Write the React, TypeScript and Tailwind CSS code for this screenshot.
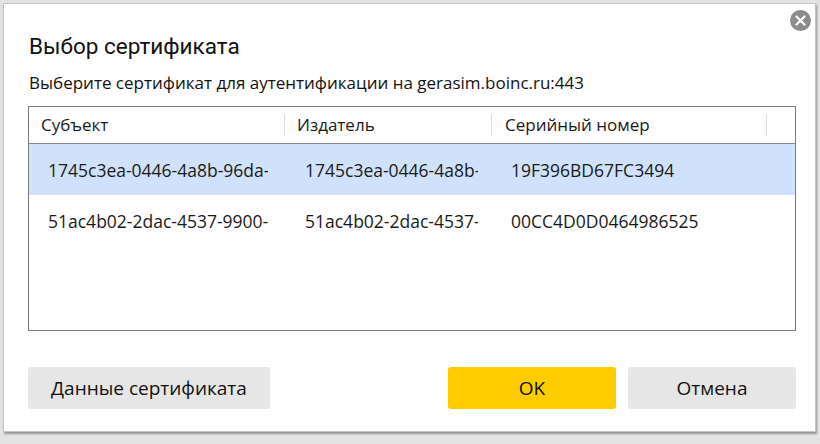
import React from "react";

const rows = [
  {
    subject: "1745c3ea-0446-4a8b-96da-7a4b1c2d3e4f",
    issuer: "1745c3ea-0446-4a8b-96da-7a4b1c2d3e4f",
    serial: "19F396BD67FC3494",
  },
  {
    subject: "51ac4b02-2dac-4537-9900-3f2e1d0c9b8a",
    issuer: "51ac4b02-2dac-4537-9900-3f2e1d0c9b8a",
    serial: "00CC4D0D0464986525",
  },
];

export default function App() {
  return (
    <div className="w-[820px] h-[444px] bg-[#e3e3e3] pt-[3px] pl-[3px] overflow-hidden">
      <div className="relative w-[813px] h-[429px] bg-white border border-[#c4c4c4] shadow-[1px_2px_2px_rgba(0,0,0,0.35)] flex flex-col" style={{ fontFamily: "'Open Sans', 'Noto Sans', sans-serif" }}>
        <button className="absolute right-[4px] top-[6px] w-[21px] h-[21px] rounded-full bg-[#8c8c8c] flex items-center justify-center">
          <svg width="11" height="11" viewBox="0 0 11 11">
            <path d="M1.5 1.5 L9.5 9.5 M9.5 1.5 L1.5 9.5" stroke="white" strokeWidth="2.2" strokeLinecap="round" />
          </svg>
        </button>
        <h1 className="pl-[25px] pt-[28px] text-[22.5px] leading-[28px] text-[#111] font-normal" style={{ fontFamily: "Roboto, sans-serif" }}>
          Выбор сертификата
        </h1>
        <p className="pl-[25px] mt-[13px] text-[17px] leading-[20px] text-[#111]">
          Выберите сертификат для аутентификации на gerasim.boinc.ru:443
        </p>
        <div className="ml-[24px] mt-[13px] w-[768px] h-[225px] border border-[#7a7a7a] bg-white overflow-hidden">
          <div className="flex h-[37px] border-b border-[#8a8a8a] text-[17px] text-[#1a1a1a]">
            <div className="w-[256px] flex items-center pl-[12px] border-r border-[#dcdcdc] my-[7px]">Субъект</div>
            <div className="w-[207px] flex items-center pl-[12px] border-r border-[#dcdcdc] my-[7px]">Издатель</div>
            <div className="w-[275px] flex items-center pl-[13px] border-r border-[#dcdcdc] my-[7px]">Серийный номер</div>
            <div className="flex-1" />
          </div>
          {rows.map((r, i) => (
            <div key={i} className={`flex h-[51px] items-center pt-[1px] text-[17.5px] text-[#1a1a1a] ${i === 0 ? "bg-[#d0e1fb]" : ""}`}>
              <div className="w-[256px] pl-[19px] pr-[14px]">
                <div className="overflow-hidden whitespace-nowrap w-[220px]">{r.subject}</div>
              </div>
              <div className="w-[207px] pl-[20px] pr-[14px]">
                <div className="overflow-hidden whitespace-nowrap">{r.issuer}</div>
              </div>
              <div className="w-[275px] pl-[19px] pr-[14px]">
                <div className="overflow-hidden whitespace-nowrap">{r.serial}</div>
              </div>
            </div>
          ))}
        </div>
        <div className="flex items-center ml-[24px] mt-[36px] w-[768px] text-[19px] text-[#111]">
          <button className="w-[242px] h-[42px] rounded-[3px] bg-[#e6e6e6]">Данные сертификата</button>
          <div className="flex-1" />
          <button className="w-[168px] h-[42px] rounded-[3px] bg-[#ffcc00]">OK</button>
          <button className="ml-[12px] w-[168px] h-[42px] rounded-[3px] bg-[#e6e6e6]">Отмена</button>
        </div>
      </div>
    </div>
  );
}
